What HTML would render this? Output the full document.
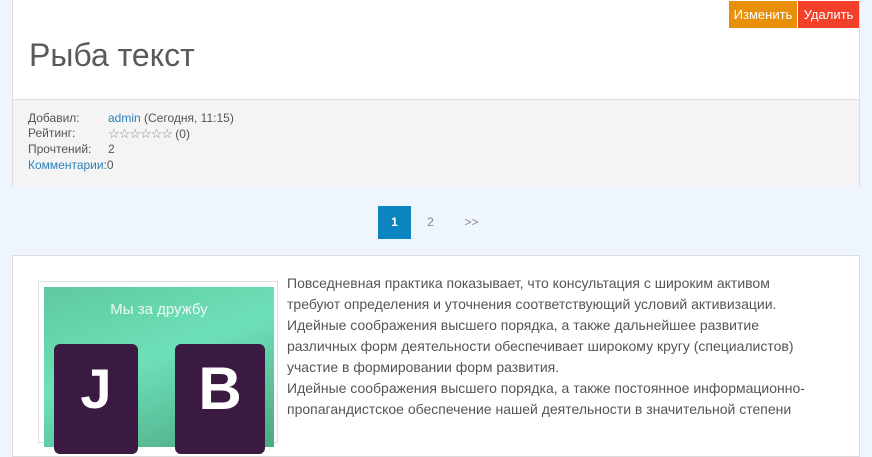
<!DOCTYPE html>
<html><head><meta charset="utf-8"><style>
body{margin:0;background:#eef5fc;font-family:"Liberation Sans",sans-serif;width:872px;height:418px;overflow:hidden;position:relative}
.card{position:absolute;left:12px;width:846px;background:#fff;border:1px solid #dcdcdc}
#c1{top:-1px;height:185px}
.btn{position:absolute;top:1px;height:27px;line-height:27px;color:#fff;font-size:13px;text-align:center}
h1{position:absolute;left:16px;top:37px;margin:0;font-weight:normal;font-size:32px;color:#5a5a5a}
.meta{position:absolute;left:0;top:99px;width:846px;height:86px;background:#f4f4f4;border-top:1px solid #ddd;font-size:12px;color:#555;line-height:15.5px}
.meta div{position:absolute;left:15px}
.meta span{position:absolute;left:80px;white-space:nowrap}
a{color:#2a82b9}
.pg{position:absolute;top:206px;height:33px;line-height:33px;font-size:12px;text-align:center;width:33px;color:#888}
#c2{top:255px;height:200px}
.frame{position:absolute;left:25px;top:25px;width:238px;height:160px;border:1px solid #ddd}
.img{position:absolute;left:5px;top:5px;width:230px;height:160px;background:linear-gradient(160deg,#5fc9a0,#6ee0b8 45%,#4aa884)}
.txt{position:absolute;left:274px;top:17px;width:535px;font-size:14px;line-height:21px;color:#555}
</style></head><body>
<div class="card" id="c1">
<div class="btn" style="left:716px;width:68px;background:#e8900a">Изменить</div>
<div class="btn" style="left:785px;width:61px;background:#f2402a">Удалить</div>
<h1>Рыба текст</h1>
<div class="meta">
<div style="top:11px">Добавил:<span><a>admin</a> (Сегодня, 11:15)</span></div>
<div style="top:26px">Рейтинг:<span><span style="position:static;color:#888;font-size:13px;letter-spacing:-1px">☆☆☆☆☆☆</span> (0)</span></div>
<div style="top:42px">Прочтений:<span>2</span></div>
<div style="top:58px"><a>Комментарии</a>:0</div>
</div></div>
<div class="pg" style="left:378px;background:#0a85c0;color:#fff;font-weight:bold">1</div>
<div class="pg" style="left:414px">2</div>
<div class="pg" style="left:455px">&gt;&gt;</div>
<div class="card" id="c2">
<div class="frame"><div class="img">
<div style="position:absolute;top:14px;width:100%;text-align:center;color:#eefaf4;font-size:15px">Мы за дружбу</div>
<div style="position:absolute;left:10px;top:57px;width:84px;height:110px;background:#3a1a40;border-radius:6px;color:#fff;font-size:56px;font-weight:bold;text-align:center;line-height:90px">J</div>
<div style="position:absolute;left:131px;top:57px;width:90px;height:110px;background:#3a1a40;border-radius:6px;color:#fff;font-size:60px;font-weight:bold;text-align:center;line-height:90px">B</div>
</div></div>
<div class="txt">Повседневная практика показывает, что консультация с широким активом требуют определения и уточнения соответствующий условий активизации. Идейные соображения высшего порядка, а также дальнейшее развитие различных форм деятельности обеспечивает широкому кругу (специалистов) участие в формировании форм развития.<br>Идейные соображения высшего порядка, а также постоянное информационно-пропагандистское обеспечение нашей деятельности в значительной степени</div>
</div>
</body></html>
